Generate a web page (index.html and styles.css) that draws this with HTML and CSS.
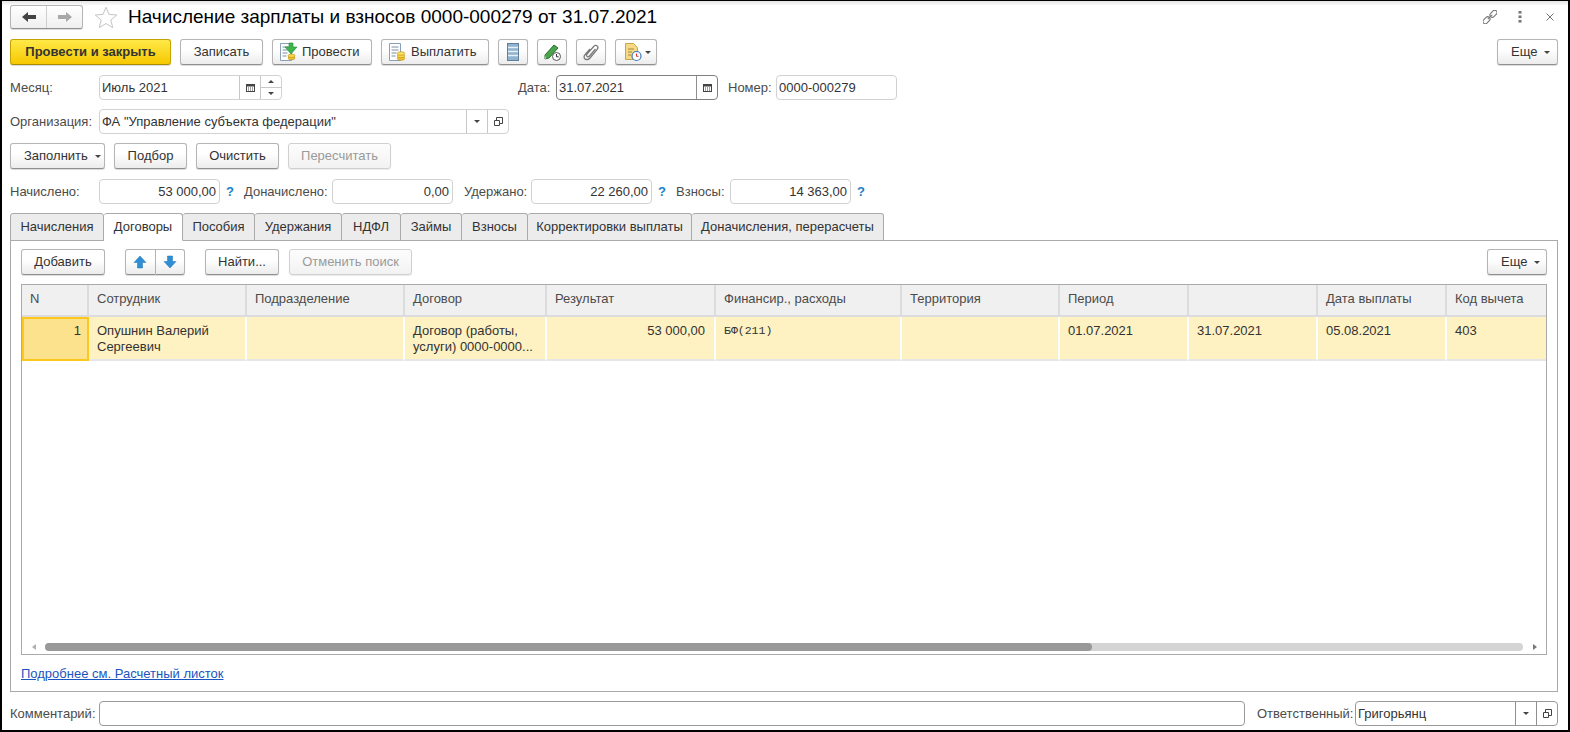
FILE: index.html
```html
<!DOCTYPE html>
<html lang="ru">
<head>
<meta charset="utf-8">
<title>Начисление зарплаты и взносов</title>
<link rel="stylesheet" href="styles.css">
</head>
<body>
<div class="window">
  <header class="head">
    <div class="nav">
      <button class="nav-btn"><svg width="16" height="12" viewBox="0 0 16 12"><path d="M1 6 7 1v3h8v4H7v3z" fill="#444"/></svg></button>
      <button class="nav-btn"><svg width="16" height="12" viewBox="0 0 16 12"><path d="M15 6 9 1v3H1v4h8v3z" fill="#a8a8a8"/></svg></button>
    </div>
    <svg class="star" width="24" height="22" viewBox="0 0 24 22"><path d="M12 1.200l3 7.200 7.800.6-6 5 1.900 7.600L12 17.500l-6.700 4.100 1.900-7.600-6-5 7.800-.6z" fill="#fff" stroke="#c4c4c4"/></svg>
    <h1 class="title">Начисление зарплаты и взносов 0000-000279 от 31.07.2021</h1>
    <div class="win-tools">
      <svg class="tool-link" width="14" height="14" viewBox="0 0 14 14"><g fill="none" stroke="#777" stroke-width="1.100"><rect x="6.500" y="1.400" width="8" height="4.600" rx="2.300" transform="rotate(-45 10.500 3.700)"/><rect x="-.5" y="8" width="8" height="4.600" rx="2.300" transform="rotate(-45 3.500 10.300)"/><path d="M4.800 9.200l4.400-4.400"/></g></svg>
      <svg class="tool-dots" width="4" height="12" viewBox="0 0 4 12"><g fill="#777"><rect x="0.500" y="0" width="3" height="2.600"/><rect x="0.500" y="4.500" width="3" height="2.600"/><rect x="0.500" y="9" width="3" height="2.600"/></g></svg>
      <svg class="tool-close" width="8" height="8" viewBox="0 0 8 8"><path d="M.5.500l7 7M7.500.500l-7 7" stroke="#777" stroke-width="1"/></svg>
    </div>
  </header>

  <div class="toolbar row-10">
    <button class="btn btn-primary w-161">Провести и закрыть</button>
    <button class="btn w-83">Записать</button>
    <button class="btn w-100 has-icon">
      <svg width="18" height="20" viewBox="0 0 18 20"><path d="M1.500 1.500h11v17h-11z" fill="#fff" stroke="#8aa0b8"/><path d="M3.500 5h6M3.500 8h5M3.500 11h5M3.500 14h4" stroke="#7b8ea5"/><path d="M9 1h4v4h4l-6 7-6-7h4z" fill="#3eb54a" stroke="#27863a" stroke-width=".6" transform="translate(1 0)"/><ellipse cx="12.500" cy="16" rx="3.500" ry="1.800" fill="#f2c230" stroke="#b98a10" stroke-width=".6"/><ellipse cx="12.500" cy="13.800" rx="3.500" ry="1.800" fill="#f8d648" stroke="#b98a10" stroke-width=".6"/></svg>
      Провести</button>
    <button class="btn w-108 has-icon">
      <svg width="18" height="20" viewBox="0 0 18 20"><path d="M1.500 1.500h11v17h-11z" fill="#fff" stroke="#8aa0b8"/><path d="M3.500 5h7M3.500 8h7M3.500 11h5M3.500 14h4" stroke="#7b8ea5"/><ellipse cx="13" cy="16.500" rx="3.800" ry="1.800" fill="#f2c230" stroke="#b98a10" stroke-width=".6"/><ellipse cx="13" cy="14" rx="3.800" ry="1.800" fill="#f8d648" stroke="#b98a10" stroke-width=".6"/><ellipse cx="13" cy="11.500" rx="3.800" ry="1.800" fill="#fbe061" stroke="#b98a10" stroke-width=".6"/></svg>
      Выплатить</button>
    <button class="btn w-30"><svg width="12" height="18" viewBox="0 0 12 18"><rect x=".5" y=".5" width="11" height="17" fill="#8fb3cf" stroke="#5f7f9b"/><path d="M1 4.500h10M1 8.500h10M1 12.500h10" stroke="#e7f0f6" stroke-width="1.500"/></svg></button>
    <button class="btn w-30"><svg width="20" height="20" viewBox="0 0 20 20"><path d="M3 13 12 3l4 3-9 10-4 1z" fill="#4aa54a" stroke="#2a6f30"/><path d="M3 13l1.200 3.500L3 17z" fill="#e6c26a"/><circle cx="14.500" cy="14.500" r="4" fill="#fff" stroke="#555"/><path d="M14.500 12v2.800h2.200" fill="none" stroke="#333"/></svg></button>
    <button class="btn w-30"><svg width="16" height="18" viewBox="0 0 16 18"><path d="M12.500 6 6.500 13c-1.500 1.800-4 0-2.500-1.800l6.500-7.500c2.500-3 6 0 3.500 3L7 15c-3 3.500-8 .5-5-3.300L7 6" fill="none" stroke="#7a7a7a" stroke-width="1.300"/></svg></button>
    <button class="btn w-42 btn-split">
      <svg width="20" height="20" viewBox="0 0 20 20"><path d="M2.500 1.500h8l4 4v12h-12z" fill="#f5d985" stroke="#c9a64a"/><path d="M5 7h6M5 10h4M5 13h3" stroke="#a88a3a"/><circle cx="13.500" cy="14" r="4.500" fill="#fff" stroke="#3f78b8" stroke-width="1.200"/><path d="M13.500 11.500v2.800h2" fill="none" stroke="#d33"/></svg>
      <span class="caret"></span></button>
    <button class="btn w-61 push-right has-caret">Еще <span class="caret"></span></button>
  </div>

  <div class="form-row row-10">
    <label class="lbl lbl-main">Месяц:</label>
    <div class="field w-183">
      <span class="val">Июль 2021</span>
      <span class="addon a-21"><svg width="9" height="9" viewBox="0 0 9 9"><rect x=".5" y="1.500" width="8" height="7" fill="#fff" stroke="#444"/><path d="M0 1h9v2.500H0z" fill="#444"/><path d="M2 5h1M4 5h1M6 5h1M2 7h1M4 7h1M6 7h1" stroke="#444"/></svg></span>
      <span class="spin"><span class="spin-part"><i class="caret-up"></i></span><span class="spin-part"><i class="caret caret-s"></i></span></span>
    </div>
    <label class="lbl lbl-date">Дата:</label>
    <div class="field field-dark w-162">
      <span class="val">31.07.2021</span>
      <span class="addon a-21"><svg width="9" height="9" viewBox="0 0 9 9"><rect x=".5" y="1.500" width="8" height="7" fill="#fff" stroke="#444"/><path d="M0 1h9v2.500H0z" fill="#444"/><path d="M2 5h1M4 5h1M6 5h1M2 7h1M4 7h1M6 7h1" stroke="#444"/></svg></span>
    </div>
    <label class="lbl lbl-num">Номер:</label>
    <div class="field w-121"><span class="val">0000-000279</span></div>
  </div>

  <div class="form-row row-9">
    <label class="lbl lbl-main">Организация:</label>
    <div class="field w-410">
      <span class="val">ФА "Управление субъекта федерации"</span>
      <span class="addon a-21"><span class="caret caret-s"></span></span>
      <span class="addon a-21"><svg width="9" height="9" viewBox="0 0 9 9"><path d="M2.500.5h6v6h-6z" fill="none" stroke="#444"/><path d="M.5 3.500h5v5h-5z" fill="#fff" stroke="#444"/></svg></span>
    </div>
  </div>

  <div class="toolbar row-9">
    <button class="btn w-95 has-caret">Заполнить <span class="caret"></span></button>
    <button class="btn w-73">Подбор</button>
    <button class="btn w-83">Очистить</button>
    <button class="btn btn-off w-103">Пересчитать</button>
  </div>

  <div class="form-row row-10">
    <label class="lbl lbl-main">Начислено:</label>
    <div class="field w-121"><span class="val val-r">53 000,00</span></div>
    <span class="help">?</span>
    <label class="lbl lbl-don">Доначислено:</label>
    <div class="field w-121"><span class="val val-r">0,00</span></div>
    <label class="lbl lbl-ud">Удержано:</label>
    <div class="field w-121"><span class="val val-r">22 260,00</span></div>
    <span class="help">?</span>
    <label class="lbl lbl-vz">Взносы:</label>
    <div class="field w-121"><span class="val val-r">14 363,00</span></div>
    <span class="help">?</span>
  </div>

  <nav class="tabs row-9">
    <a class="tab t1">Начисления</a>
    <a class="tab tab-on t2">Договоры</a>
    <a class="tab t3">Пособия</a>
    <a class="tab t4">Удержания</a>
    <a class="tab t5">НДФЛ</a>
    <a class="tab t6">Займы</a>
    <a class="tab t7">Взносы</a>
    <a class="tab t8">Корректировки выплаты</a>
    <a class="tab t9">Доначисления, перерасчеты</a>
  </nav>

  <section class="panel">
    <div class="toolbar panel-bar">
      <button class="btn w-84">Добавить</button>
      <div class="btn-group">
        <button class="btn seg"><svg width="14" height="14" viewBox="0 0 14 14"><path d="M7 1l6 6.500H9.500V13h-5V7.500H1z" fill="#2f8fd6" stroke="#1f70b0" stroke-width=".5"/></svg></button>
        <button class="btn seg"><svg width="14" height="14" viewBox="0 0 14 14"><path d="M7 13l6-6.500H9.500V1h-5v5.500H1z" fill="#2f8fd6" stroke="#1f70b0" stroke-width=".5"/></svg></button>
      </div>
      <button class="btn w-74">Найти...</button>
      <button class="btn btn-off w-123">Отменить поиск</button>
      <button class="btn w-60 push-right has-caret">Еще <span class="caret"></span></button>
    </div>

    <div class="grid-wrap">
      <table class="grid">
        <colgroup>
          <col class="c1"><col class="c2"><col class="c3"><col class="c4"><col class="c5"><col class="c6"><col class="c7"><col class="c8"><col class="c9"><col class="c10"><col class="c11">
        </colgroup>
        <thead>
          <tr><th>N</th><th>Сотрудник</th><th>Подразделение</th><th>Договор</th><th>Результат</th><th>Финансир., расходы</th><th>Территория</th><th>Период</th><th></th><th>Дата выплаты</th><th>Код вычета</th></tr>
        </thead>
        <tbody>
          <tr>
            <td class="cell-cur">1</td>
            <td>Опушнин Валерий<br>Сергеевич</td>
            <td></td>
            <td>Договор (работы,<br>услуги) 0000-0000...</td>
            <td class="num">53 000,00</td>
            <td class="mono">БФ(211)</td>
            <td></td>
            <td>01.07.2021</td>
            <td>31.07.2021</td>
            <td>05.08.2021</td>
            <td>403</td>
          </tr>
        </tbody>
      </table>
      <div class="scrollbar">
        <span class="arr arr-l"></span>
        <div class="track"><div class="thumb"></div></div>
        <span class="arr arr-r"></span>
      </div>
    </div>
    <a class="link" href="#">Подробнее см. Расчетный листок</a>
  </section>

  <div class="form-row row-9">
    <label class="lbl lbl-main">Комментарий:</label>
    <div class="field field-mid w-1146"></div>
    <label class="lbl lbl-resp">Ответственный:</label>
    <div class="field field-mid w-203">
      <span class="val">Григорьянц</span>
      <span class="addon a-21"><span class="caret caret-s"></span></span>
      <span class="addon a-21"><svg width="9" height="9" viewBox="0 0 9 9"><path d="M2.500.5h6v6h-6z" fill="none" stroke="#444"/><path d="M.5 3.500h5v5h-5z" fill="#fff" stroke="#444"/></svg></span>
    </div>
  </div>
</div>
</body>
</html>
```
FILE: styles.css
```css
* { box-sizing: border-box; }
html, body { margin: 0; height: 100%; overflow: hidden; background: #fff; }
body { font: 13px/16px "Liberation Sans", Arial, sans-serif; color: #333; }

.window {
  width: 1570px; height: 732px;
  border: solid #000; border-width: 1px 2px 2px 2px;
  padding: 4px 10px 0 8px;
  background: linear-gradient(#e4e4e4, #fff 5px);
}
.row-9 { margin-top: 9px; }
.row-10 { margin-top: 10px; }

.head { display: flex; align-items: center; height: 24px; }
.nav { display: flex; width: 73px; height: 24px; border: 1px solid #b5b5b5; border-bottom-color: #8f8f8f; border-radius: 3px; background: linear-gradient(#fff, #efefef); box-shadow: 0 1px 1px rgba(0,0,0,.15); }
.nav-btn { flex: 1; border: 0; padding: 0; background: none; display: flex; align-items: center; justify-content: center; }
.nav-btn + .nav-btn { border-left: 1px solid #cfcfcf; }
.star { margin-left: 11px; }
.title { margin: 0 0 0 10px; font: 400 19px/24px "Liberation Sans", Arial, sans-serif; color: #000; }
.win-tools { margin-left: auto; display: flex; align-items: center; margin-right: 4px; }
.tool-dots { margin-left: 21px; }
.tool-close { margin-left: 24px; }

.toolbar { display: flex; gap: 9px; height: 26px; }
.btn {
  height: 26px; padding: 0; font: 13px/16px "Liberation Sans", Arial, sans-serif; color: #333;
  border: 1px solid #b5b5b5; border-bottom-color: #8f8f8f; border-radius: 3px;
  background: linear-gradient(#fff 40%, #ececec);
  box-shadow: 0 1px 1px rgba(0,0,0,.15);
  display: flex; align-items: center; justify-content: center; gap: 5px;
}
.has-icon { justify-content: flex-start; padding-left: 6px; }
.has-caret { justify-content: flex-start; padding-left: 13px; }
.btn-split { justify-content: flex-start; padding-left: 7px; gap: 0; }
.btn-primary { font-weight: 700; background: linear-gradient(#ffe948, #f6c800); border-color: #c4a400; border-bottom-color: #a98d00; }
.btn-off { color: #9a9a9a; border-color: #d0d0d0; background: linear-gradient(#fdfdfd, #f2f2f2); box-shadow: 0 1px 1px rgba(0,0,0,.08); }
.push-right { margin-left: auto; }
.caret { display: inline-block; width: 0; height: 0; border: 3px solid transparent; border-top: 3px solid #444; border-bottom: 0; margin-left: 2px; vertical-align: middle; }
.caret-s { margin: 0; }
.caret-up { display: inline-block; width: 0; height: 0; border: 3px solid transparent; border-bottom: 3px solid #444; border-top: 0; }

.w-30 { width: 30px; } .w-42 { width: 42px; } .w-60 { width: 60px; } .w-61 { width: 61px; }
.w-73 { width: 73px; } .w-74 { width: 74px; } .w-83 { width: 83px; } .w-84 { width: 84px; }
.w-95 { width: 95px; } .w-100 { width: 100px; } .w-103 { width: 103px; } .w-108 { width: 108px; }
.w-121 { width: 121px; } .w-123 { width: 123px; } .w-161 { width: 161px; } .w-162 { width: 162px; }
.w-183 { width: 183px; } .w-203 { width: 203px; } .w-410 { width: 410px; } .w-1146 { width: 1146px; }

.form-row { display: flex; align-items: center; height: 25px; }
.lbl { color: #4b4b4b; white-space: nowrap; }
.lbl-main { width: 89px; }
.lbl-date { margin-left: 236px; width: 38px; }
.lbl-num { margin-left: 10px; width: 48px; }
.lbl-don { margin-left: 7px; width: 88px; }
.lbl-ud { margin-left: 11px; width: 67px; }
.lbl-vz { margin-left: 7px; width: 54px; }
.lbl-resp { margin-left: 12px; width: 98px; }
.help { width: 17px; padding-left: 6px; color: #1a7fc4; font-weight: 700; }

.field { display: flex; height: 25px; border: 1px solid #d2d2d2; border-radius: 4px; background: #fff; overflow: hidden; }
.field-dark { border-color: #7f7f7f; }
.field-mid { border-color: #999; }
.val { flex: 1; padding: 0 3px 0 2px; line-height: 23px; color: #333; white-space: nowrap; overflow: hidden; }
.val-r { text-align: right; }
.addon { flex: none; display: flex; align-items: center; justify-content: center; border-left: 1px solid #c8c8c8; }
.field-dark .addon, .field-mid .addon { border-left-color: #8f8f8f; }
.a-21 { width: 21px; }
.spin { flex: none; width: 21px; display: flex; flex-direction: column; border-left: 1px solid #c8c8c8; }
.spin-part { flex: 1; display: flex; align-items: center; justify-content: center; }
.spin-part + .spin-part { border-top: 1px solid #c8c8c8; }

.tabs { display: flex; height: 28px; position: relative; z-index: 1; margin-bottom: -1px; }
.tab { display: flex; align-items: center; justify-content: center; height: 28px; border: 1px solid #aaa; border-left: 0; border-radius: 3px 3px 0 0; background: #ececec; color: #333; }
.t1 { border-left: 1px solid #aaa; }
.tab-on { background: #fff; border-bottom-color: #fff; }
.t1 { width: 94px; } .t2 { width: 79px; } .t3 { width: 72px; } .t4 { width: 87px; } .t5 { width: 59px; }
.t6 { width: 61px; } .t7 { width: 66px; } .t8 { width: 164px; } .t9 { width: 192px; }

.panel { height: 452px; border: 1px solid #aaa; padding: 8px 10px 0; display: flex; flex-direction: column; }
.panel-bar { gap: 0; }
.panel-bar > .btn + .btn { margin-left: 10px; }
.btn-group { display: flex; width: 60px; margin: 0 20px; }
.seg { flex: 1; border-radius: 0; }
.seg:first-child { border-radius: 3px 0 0 3px; }
.seg:last-child { border-radius: 0 3px 3px 0; border-left: 0; }
.panel-bar > .btn + .btn.push-right { margin-left: auto; }

.grid-wrap { margin-top: 9px; height: 371px; border: 1px solid #aaa; display: flex; flex-direction: column; justify-content: space-between; }
.grid { border-collapse: separate; border-spacing: 0; table-layout: fixed; width: 1524px; }
.c1 { width: 67px; } .c2 { width: 158px; } .c3 { width: 158px; } .c4 { width: 142px; } .c5 { width: 169px; } .c6 { width: 186px; }
.c7 { width: 158px; } .c8 { width: 129px; } .c9 { width: 129px; } .c10 { width: 129px; } .c11 { width: 99px; }
.grid th { height: 32px; padding: 0 8px 2px; background: #f0f0f0; font-weight: 400; text-align: left; color: #4b4b4b; border-right: 2px solid #dcdcdc; border-bottom: 2px solid #dcdcdc; white-space: nowrap; }
.grid th:last-child, .grid td:last-child { border-right: 0; }
.grid td { height: 43px; padding: 6px 8px 4px; background: #fef1c2; vertical-align: top; line-height: 16px; color: #333; border-right: 2px solid #fff; border-bottom: 2px solid #e6e6e6; white-space: nowrap; }
.grid .cell-cur { background: #fde28e; border: 2px solid #fcc81e; text-align: right; padding: 4px 6px 3px 0; }
.grid .num { text-align: right; padding-right: 9px; }
.grid .mono { font: 11.5px/16px "Liberation Mono", monospace; }

.scrollbar { display: flex; align-items: center; height: 8px; margin: 0 0 3px; padding: 0 9px 0 10px; }
.arr { width: 0; height: 0; border: 3px solid transparent; }
.arr-l { border-right: 4px solid #b0b0b0; border-left: 0; }
.arr-r { border-left: 4px solid #777; border-right: 0; }
.track { flex: 1; height: 8px; margin: 0 10px 0 9px; border-radius: 4px; background: #d4d4d4; }
.thumb { width: 1047px; height: 8px; border-radius: 4px; background: #999; }

.link { margin-top: 11px; color: #1a55bd; text-decoration: underline; }
```
